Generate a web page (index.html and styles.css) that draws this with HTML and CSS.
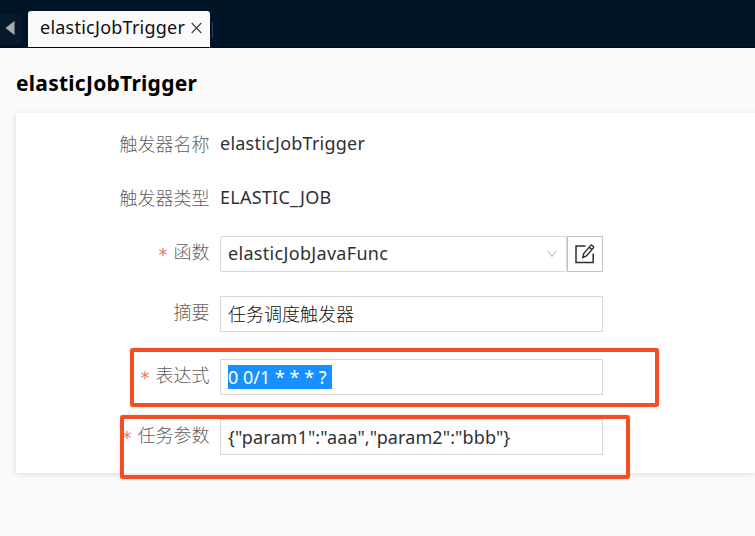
FILE: index.html
```html
<!DOCTYPE html>
<html lang="zh-CN">
<head>
<meta charset="utf-8">
<title>elasticJobTrigger</title>
<link rel="stylesheet" href="styles.css">
</head>
<body>
<header class="tabbar">
  <div class="scroll-left"><svg width="10" height="14" viewBox="0 0 10 14"><path d="M9.5 0v14L.5 7z" fill="#a7abb0"/></svg></div>
  <div class="tab"><span class="tab-name">elasticJobTrigger</span><svg width="11" height="12" viewBox="0 0 11 12"><path d="M.7 1l9.6 10M10.3 1L.7 11" stroke="#444" stroke-width="1.2" fill="none"/></svg></div>
  <i class="divider"></i>
</header>
<main>
  <h1>elasticJobTrigger</h1>
  <section class="card">
    <div class="row"><label>触发器名称</label><div class="value name">elasticJobTrigger</div></div>
    <div class="row type-row"><label>触发器类型</label><div class="value type">ELASTIC_JOB</div></div>
    <div class="row func-row"><label class="up"><b>*</b>函数</label>
      <div class="select"><span class="func">elasticJobJavaFunc</span><svg width="10" height="8" viewBox="0 0 10 8"><path d="M.8 1L5 6.3 9.2 1" fill="none" stroke="#bfbfbf" stroke-width="1.1"/></svg></div>
      <div class="edit"><svg width="20" height="20" viewBox="0 0 20 20" fill="none" stroke="#2d2d2d"><path d="M10.5 2H1v16.5h17.2V9.5" stroke-width="1.5"/><path d="M7.8 13.5l.9-4L15.8 1.4q.6-.6 1.3 0l1.2 1.1q.7.7.1 1.4l-7 8.1zM14.2 3.2l2.6 2.4" stroke-width="1.4"/></svg></div>
    </div>
    <div class="row desc-row"><label class="up">摘要</label><div class="input desc">任务调度触发器</div></div>
    <div class="row expr-row"><label class="up"><b>*</b>表达式</label><div class="input"><span class="selected">0 0/1 * * * ?</span></div></div>
    <div class="row param-row"><label class="up"><b>*</b>任务参数</label><div class="input"><span class="param">{"param1":"aaa","param2":"bbb"}</span></div></div>
  </section>
</main>
<div class="mark mark-expr"></div>
<div class="mark mark-param"></div>
</body>
</html>
```
FILE: styles.css
```css
* { box-sizing: border-box; }
body { margin: 0; height: 536px; overflow: hidden; background: #fafafa; color: #303133; font: 18px/36px "Noto Sans", "Noto Sans CJK SC", sans-serif; }
svg { display: block; flex: none; }
.tabbar { height: 48px; background: #001427; display: flex; align-items: flex-start; border-bottom: 1px solid #000b1a; }
.scroll-left { width: 22px; height: 30px; margin-top: 14px; padding: 7px 0 0 5px; background: #07192a; border-radius: 0 4px 4px 0; }
.tab { width: 182px; height: 36px; margin: 11px 0 0 6px; padding-left: 12px; background: #fafafa; border-radius: 3px 3px 0 0; color: #111; display: flex; align-items: center; line-height: 33px; }
.tab svg { margin-top: -2px; }
.tab-name { width: 151px; height: 36px; white-space: nowrap; letter-spacing: .24px; }
.divider { width: 1px; height: 16px; margin: 22px 0 0 2px; background: #34424f; }
main { padding-left: 16px; }
h1 { height: 65px; margin: 0; padding-top: 17px; font-size: 21px; line-height: 36px; font-weight: 700; color: #000; letter-spacing: .26px; white-space: nowrap; }
.card { height: 360px; padding-top: 13px; background: #fff; box-shadow: 0 1px 6px rgba(0,0,0,.12); }
.row { display: flex; height: 36px; white-space: nowrap; }
.type-row { margin-top: 18px; }
.func-row { margin-top: 20px; }
.desc-row, .param-row { margin-top: 24px; }
.expr-row { margin-top: 27px; }
label { width: 193.5px; margin-right: 10.5px; text-align: right; color: #5f5f5f; line-height: 34px; font-family: "Noto Sans CJK SC", sans-serif; font-weight: 300; }
.up { line-height: 30px; }
label b { display: inline-block; font: 400 18px/18px "DejaVu Sans", sans-serif; color: #e87575; margin-right: 6px; transform: translateY(2px); }
.value { line-height: 35px; }
.name { letter-spacing: .24px; }
.func { line-height: 34px; margin-top: -2px; letter-spacing: .31px; }
.type { letter-spacing: .25px; }
.param { letter-spacing: .1px; }
.select, .input { border: 1px solid #d9d9d9; background: #fff; padding-left: 7px; line-height: 34px; }
.input { width: 383px; }
.desc { font-family: "Noto Sans CJK SC", sans-serif; font-weight: 300; color: #111; line-height: 32px; }
.select { width: 347px; border-radius: 2px; display: flex; justify-content: space-between; align-items: center; padding-right: 9px; }
.edit { width: 36px; border: 1px solid #c4c4c4; display: flex; align-items: center; justify-content: center; }
.selected { display: inline-block; width: 104px; height: 24px; margin-top: 5px; line-height: 24px; background: #1890ff; color: #fff; }
.mark { position: absolute; border: 4px solid #f05023; border-radius: 3px; box-shadow: 0 0 1px #f05023; }
.mark-expr { left: 130px; top: 348px; width: 529px; height: 59px; }
.mark-param { left: 120px; top: 415px; width: 510px; height: 64px; }
```
